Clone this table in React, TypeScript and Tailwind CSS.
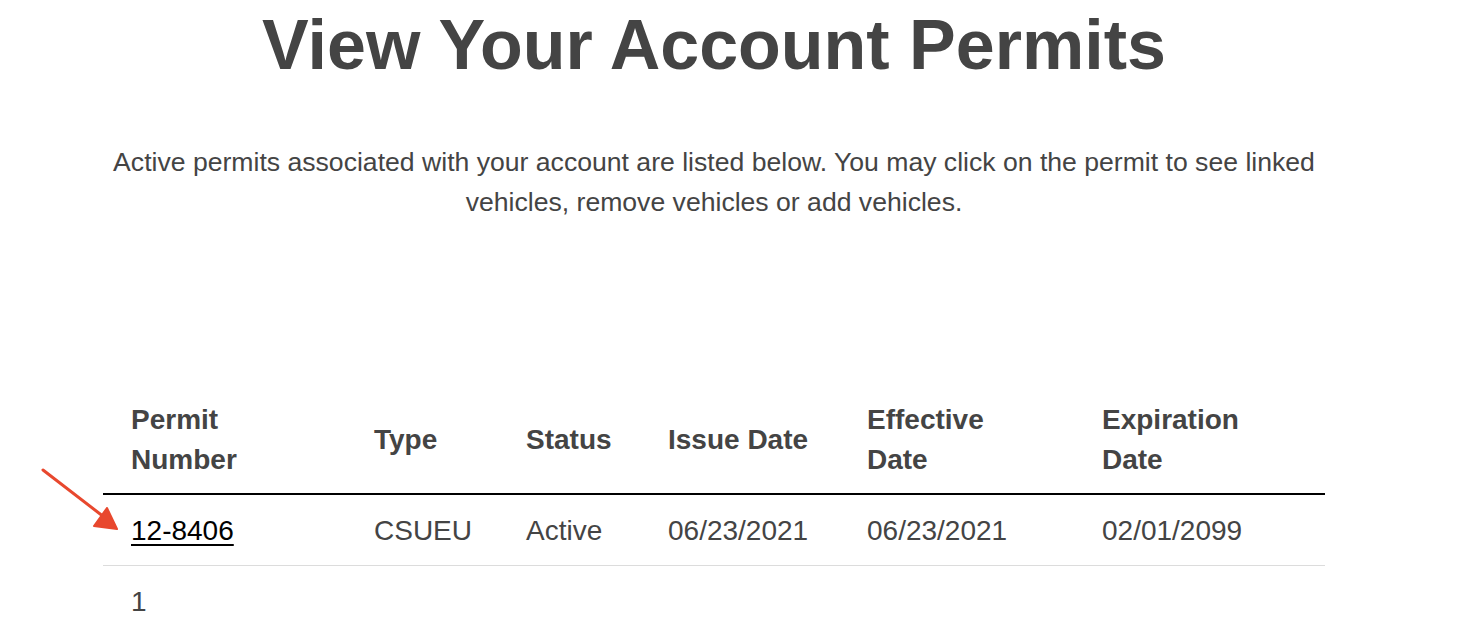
import React from "react";

const headers = [
  { label: ["Permit", "Number"], w: "w-[243px]" },
  { label: ["Type"], w: "w-[152px]" },
  { label: ["Status"], w: "w-[142px]" },
  { label: ["Issue Date"], w: "w-[199px]" },
  { label: ["Effective", "Date"], w: "w-[235px]" },
  { label: ["Expiration", "Date"], w: "w-[251px]" },
];

const permits = [
  {
    number: "12-8406",
    type: "CSUEU",
    status: "Active",
    issued: "06/23/2021",
    effective: "06/23/2021",
    expires: "02/01/2099",
  },
];

function PointerArrow() {
  return (
    <svg
      className="absolute left-0 top-0 pointer-events-none"
      width="140"
      height="560"
      viewBox="0 0 140 560"
    >
      <line x1="43" y1="470" x2="104" y2="517" stroke="#e8482e" strokeWidth="3" strokeLinecap="round" />
      <polygon points="117,529 107,508 94,526" fill="#e8482e" stroke="#e8482e" strokeWidth="2" strokeLinejoin="round" />
    </svg>
  );
}

export default function App() {
  return (
    <div
      className="relative w-[1428px] bg-white text-[#444] pb-10"
      style={{ fontFamily: '"Liberation Sans", Arial, Helvetica, sans-serif' }}
    >
      <PointerArrow />
      <h1 className="pt-[10px] text-center text-[70px] font-bold leading-none">
        View Your Account Permits
      </h1>

      <p className="mx-auto mt-[62px] w-[1222px] text-center text-[26.6px] leading-[40px]">
        Active permits associated with your account are listed below. You may click on the permit to see linked
        vehicles, remove vehicles or add vehicles.
      </p>

      <div className="mx-auto mt-[163px] w-[1222px]">
        <table className="w-full table-fixed border-collapse text-[28px] leading-[40px]">
          <thead>
            <tr className="border-b-2 border-black">
              {headers.map((h) => (
                <th
                  key={h.label.join(" ")}
                  className={`${h.w} px-7 pt-[15px] pb-[13px] text-left align-middle font-bold`}
                >
                  {h.label.map((line) => (
                    <div key={line}>{line}</div>
                  ))}
                </th>
              ))}
            </tr>
          </thead>
          <tbody>
            {permits.map((p) => (
              <tr key={p.number} className="border-b border-[#dcdcdc]">
                <td className="px-7 pt-[16px] pb-[14px]">
                  <a href="#" className="text-black underline decoration-[2px] underline-offset-[4px]">
                    {p.number}
                  </a>
                </td>
                <td className="px-7 pt-[16px] pb-[14px]">{p.type}</td>
                <td className="px-7 pt-[16px] pb-[14px]">{p.status}</td>
                <td className="px-7 pt-[16px] pb-[14px]">{p.issued}</td>
                <td className="px-7 pt-[16px] pb-[14px]">{p.effective}</td>
                <td className="px-7 pt-[16px] pb-[14px]">{p.expires}</td>
              </tr>
            ))}
          </tbody>
        </table>
        <div className="mt-4 px-7 text-[28px] leading-[40px]">1</div>
      </div>
    </div>
  );
}
